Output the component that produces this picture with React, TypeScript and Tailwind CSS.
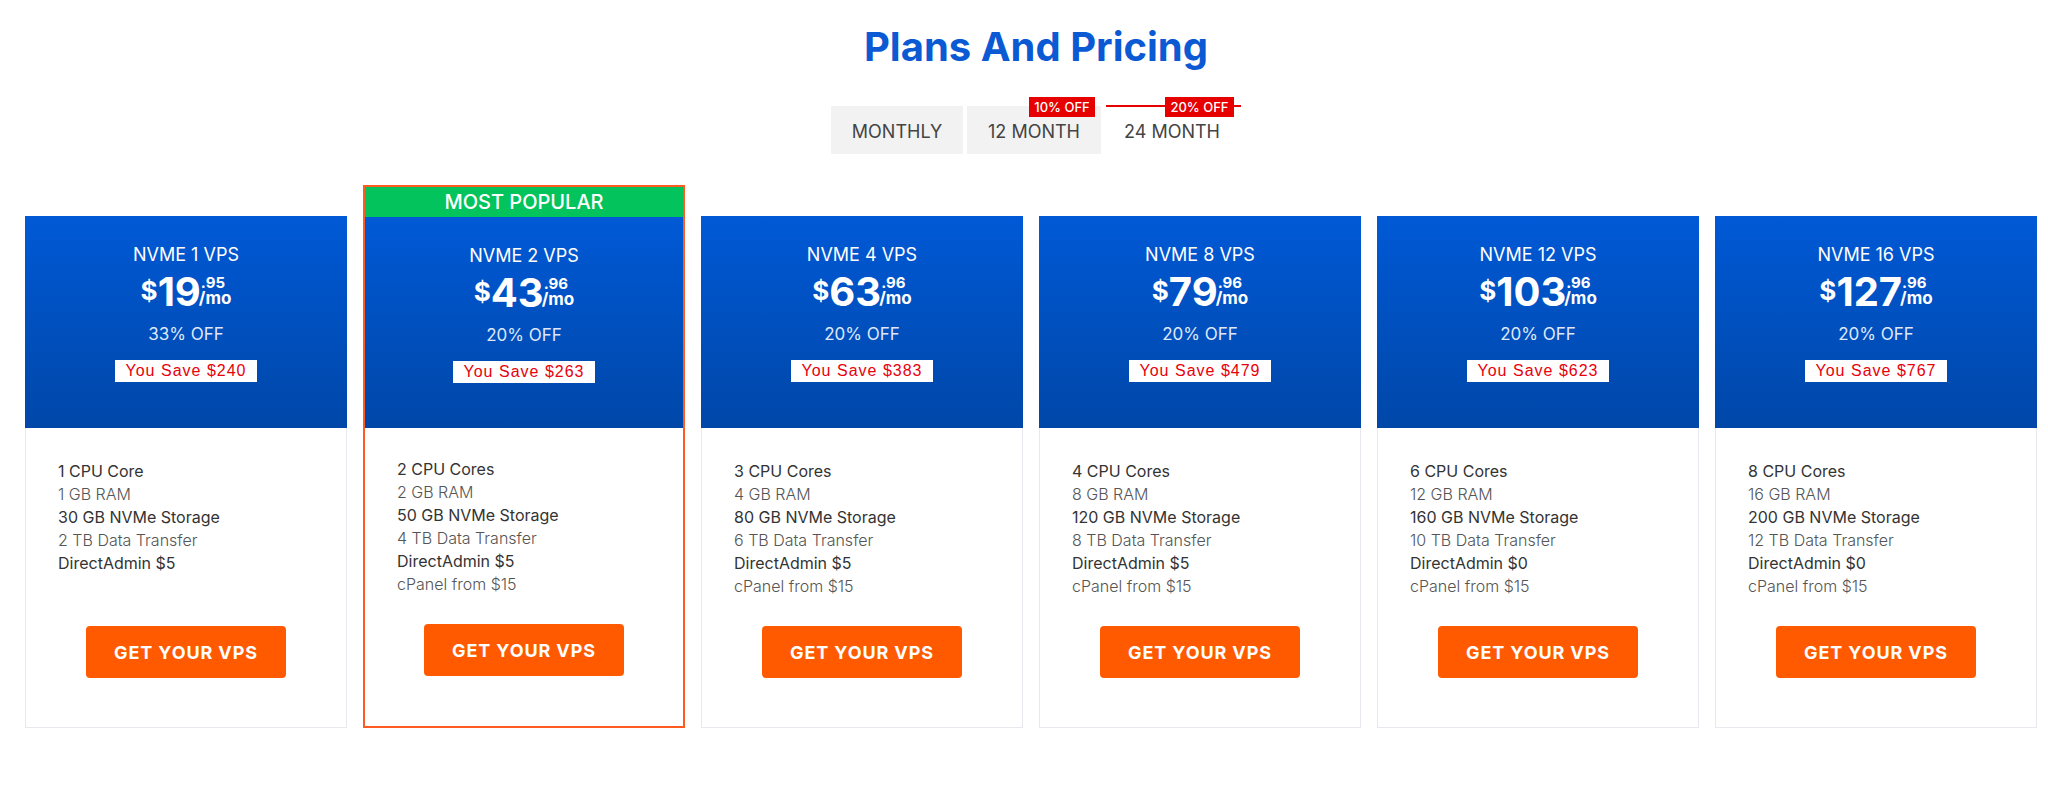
import React from "react";

type Plan = {
  name: string;
  dollars: string;
  cents: string;
  off: string;
  save: string;
  features: string[];
  popular?: boolean;
};

const plans: Plan[] = [
  {
    name: "NVME 1 VPS",
    dollars: "19",
    cents: ".95",
    off: "33% OFF",
    save: "You Save $240",
    features: ["1 CPU Core", "1 GB RAM", "30 GB NVMe Storage", "2 TB Data Transfer", "DirectAdmin $5"],
  },
  {
    name: "NVME 2 VPS",
    dollars: "43",
    cents: ".96",
    off: "20% OFF",
    save: "You Save $263",
    popular: true,
    features: ["2 CPU Cores", "2 GB RAM", "50 GB NVMe Storage", "4 TB Data Transfer", "DirectAdmin $5", "cPanel from $15"],
  },
  {
    name: "NVME 4 VPS",
    dollars: "63",
    cents: ".96",
    off: "20% OFF",
    save: "You Save $383",
    features: ["3 CPU Cores", "4 GB RAM", "80 GB NVMe Storage", "6 TB Data Transfer", "DirectAdmin $5", "cPanel from $15"],
  },
  {
    name: "NVME 8 VPS",
    dollars: "79",
    cents: ".96",
    off: "20% OFF",
    save: "You Save $479",
    features: ["4 CPU Cores", "8 GB RAM", "120 GB NVMe Storage", "8 TB Data Transfer", "DirectAdmin $5", "cPanel from $15"],
  },
  {
    name: "NVME 12 VPS",
    dollars: "103",
    cents: ".96",
    off: "20% OFF",
    save: "You Save $623",
    features: ["6 CPU Cores", "12 GB RAM", "160 GB NVMe Storage", "10 TB Data Transfer", "DirectAdmin $0", "cPanel from $15"],
  },
  {
    name: "NVME 16 VPS",
    dollars: "127",
    cents: ".96",
    off: "20% OFF",
    save: "You Save $767",
    features: ["8 CPU Cores", "16 GB RAM", "200 GB NVMe Storage", "12 TB Data Transfer", "DirectAdmin $0", "cPanel from $15"],
  },
];

export default function App() {
  return (
    <div className="min-h-[804px] w-full bg-white font-['Inter',sans-serif]">
      <h2 className="pl-[24px] pt-[22px] text-center text-[40px] font-bold leading-[50px] text-[#0b5ad4]">
        Plans And Pricing
      </h2>

      <div className="mt-[34px] flex justify-center pl-[22px]">
        <div className="flex gap-[4px]">
          <button className="h-[48px] w-[132px] bg-[#f2f2f2] pt-[3px] text-[18px] text-[#444]">MONTHLY</button>
          <button className="relative h-[48px] w-[134px] bg-[#f2f2f2] pt-[3px] text-[18px] text-[#444]">
            12 MONTH
            <span className="absolute -top-[9px] right-[6px] h-[20px] w-[66px] bg-[#e60000] text-[13px] font-medium leading-[20px] text-white">
              10% OFF
            </span>
          </button>
          <button className="relative h-[48px] w-[134px] pt-[3px] text-[18px] text-[#444]">
            24 MONTH
            <span className="absolute -top-[1px] left-[1px] right-[-2px] h-[2px] bg-[#e60000]" />
            <span className="absolute -top-[9px] right-[5px] h-[20px] w-[69px] bg-[#e60000] text-[13px] font-medium leading-[20px] text-white">
              20% OFF
            </span>
          </button>
        </div>
      </div>

      <div className="ml-[25px] mt-[31px] grid w-[2012px] grid-cols-6 gap-[16px]">
        {plans.map((plan) => (
          <PlanCard key={plan.name} plan={plan} />
        ))}
      </div>
    </div>
  );
}

function PlanCard({ plan }: { plan: Plan }) {
  const header = (
    <div className="flex h-full flex-col items-center bg-gradient-to-b from-[#0059d6] to-[#0047a8] pt-[27px] text-white">
      <p className="text-[18px] leading-[24px]">{plan.name}</p>
      <div className="mt-[5px] flex items-start leading-none">
        <span className="mt-[6px] text-[26px] font-bold leading-none">$</span>
        <span className="text-[40px] font-bold leading-none">{plan.dollars}</span>
        <span className="flex flex-col">
          <span className="mt-[3px] text-[15px] font-bold leading-none">{plan.cents}</span>
          <span className="-ml-[2px] text-[17px] font-bold leading-none">/mo</span>
        </span>
      </div>
      <p className="mt-[10px] text-[17px] leading-[24px] text-[#dfe8fb]">{plan.off}</p>
      <span className="mt-[14px] bg-white px-[11px] font-['Liberation_Sans',Arial,sans-serif] text-[16px] leading-[22px] tracking-[1px] text-[#e8000b]">
        {plan.save}
      </span>
    </div>
  );

  const body = (
    <div className="flex flex-col pt-[32px]">
      <ul className="h-[166px] pl-[32px] text-[16px] leading-[23px]">
        {plan.features.map((f, i) => (
          <li key={f} className={i % 2 === 0 ? "text-[#333]" : "font-light text-[#555]"}>
            {f}
          </li>
        ))}
      </ul>
      <div className="flex justify-center">
        <button className="h-[52px] w-[200px] rounded-[4px] bg-[#ff5a00] text-[18px] font-bold tracking-[0.9px] text-white">
          GET YOUR VPS
        </button>
      </div>
    </div>
  );

  if (plan.popular) {
    return (
      <div className="flex h-[543px] flex-col border-2 border-[#ff5a1f]">
        <div className="h-[30px] bg-[#02c35c] text-center text-[20px] font-medium leading-[30px] text-white">
          MOST POPULAR
        </div>
        <div className="h-[211px]">{header}</div>
        <div className="-mt-[2px]">{body}</div>
      </div>
    );
  }

  return (
    <div className="mt-[31px] flex flex-col">
      <div className="h-[212px]">{header}</div>
      <div className="h-[300px] border-x border-b border-[#e8e8ee]">{body}</div>
    </div>
  );
}
